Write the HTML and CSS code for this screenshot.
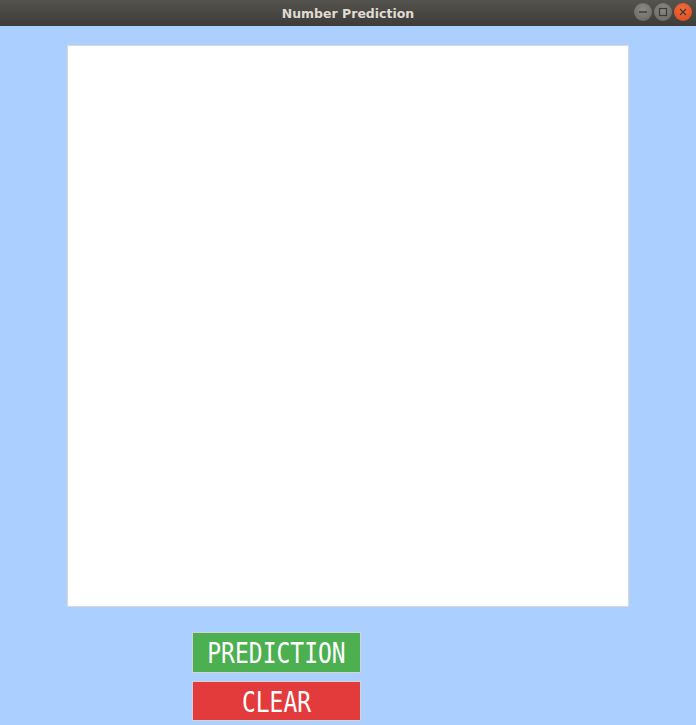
FILE: index.html
```html
<!DOCTYPE html>
<html>
<head>
<meta charset="utf-8">
<link rel="stylesheet" href="styles.css">
<title>Number Prediction</title>
</head>
<body>
<div class="window">
  <div class="titlebar">
    <span class="title">Number Prediction</span>
    <div class="controls">
      <span class="ctl ctl-min"><svg width="18" height="18" viewBox="0 0 18 18"><line x1="5" y1="9" x2="13" y2="9" stroke="#3c3b37" stroke-width="1.4"/></svg></span>
      <span class="ctl ctl-max"><svg width="18" height="18" viewBox="0 0 18 18"><rect x="5.5" y="5.5" width="7" height="7" fill="none" stroke="#3c3b37" stroke-width="1.2"/></svg></span>
      <span class="ctl ctl-close"><svg width="18" height="18" viewBox="0 0 18 18"><path d="M6 6 L12 12 M12 6 L6 12" stroke="#3c3b37" stroke-width="1.3"/></svg></span>
    </div>
  </div>
  <div class="content">
    <div class="canvas"></div>
    <div class="buttons">
      <button class="btn btn-predict"><span>PREDICTION</span></button>
      <button class="btn btn-clear"><span>CLEAR</span></button>
    </div>
  </div>
</div>
</body>
</html>
```
FILE: styles.css
```css
html, body {
  margin: 0;
  padding: 0;
  width: 696px;
  height: 725px;
  overflow: hidden;
  background: #abd0ff;
}
.window {
  display: flex;
  flex-direction: column;
  width: 696px;
  height: 725px;
}
.titlebar {
  position: relative;
  height: 26px;
  flex: none;
  background: linear-gradient(#55534e, #3d3c38);
  display: flex;
  align-items: center;
  justify-content: center;
}
.title {
  font-family: "DejaVu Sans", sans-serif;
  font-weight: bold;
  font-size: 12.5px;
  color: #dfdbd2;
}
.controls {
  position: absolute;
  right: 4px;
  top: 3px;
  display: flex;
  gap: 2px;
}
.ctl {
  width: 18px;
  height: 18px;
  border-radius: 50%;
  display: flex;
  background: radial-gradient(circle at 50% 35%, #8a8983, #65645f);
}
.ctl-close {
  background: radial-gradient(circle at 50% 35%, #f26c3d, #d9491b);
}
.content {
  flex: 1;
  display: flex;
  flex-direction: column;
  padding-top: 19px;
}
.canvas {
  margin-left: 67px;
  width: 560px;
  height: 560px;
  background: #ffffff;
  border: 1px solid #d8d8d8;
}
.buttons {
  display: flex;
  flex-direction: column;
  gap: 8px;
  margin-top: 25px;
  margin-left: 192px;
}
.btn {
  width: 169px;
  height: 41px;
  padding: 0;
  border: 1px solid #d3d3d3;
  color: #ffffff;
  font-family: "DejaVu Sans Mono", monospace;
  font-size: 23px;
  display: flex;
  align-items: center;
  justify-content: center;
}
.btn span {
  display: inline-block;
  transform: scaleY(1.2);
  line-height: 1;
  padding-top: 2px;
}
.btn-predict {
  background: #4caf50;
}
.btn-clear {
  height: 40px;
  background: #e33b3b;
}
```
